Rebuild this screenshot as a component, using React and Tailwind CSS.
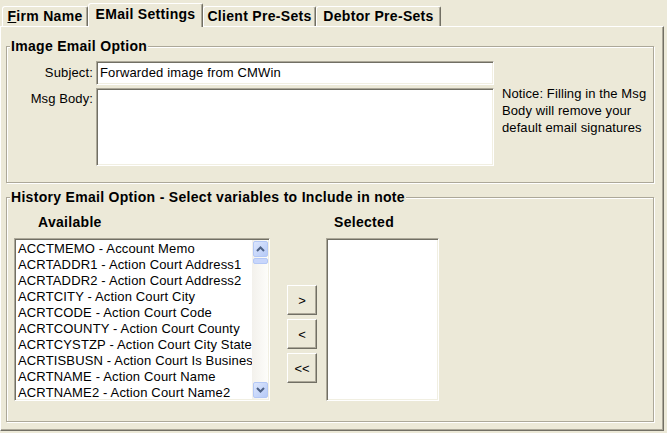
import React from "react";

const sunken =
  "border border-t-[#ACA899] border-l-[#ACA899] border-r-white border-b-white shadow-[inset_1px_1px_0_#716F64,inset_-1px_-1px_0_#F1EFE2] bg-white";

function Tab({ children, w, selected }) {
  const base =
    "flex items-center justify-center border-l border-t border-white border-r border-r-[#716F64] shadow-[inset_-1px_0_0_#ACA899] rounded-tl-[3px] rounded-tr-[2px] text-[14px] font-bold tracking-[0.3px] whitespace-nowrap bg-[#ECE9D8]";
  return (
    <div
      className={
        base +
        (selected
          ? " relative z-10 h-[24px] -mb-px pb-[3px]"
          : " h-[20px]")
      }
      style={{ width: w }}
    >
      {children}
    </div>
  );
}

function Group({ title, className, children }) {
  return (
    <div
      className={
        "relative w-[648px] border border-[#ACA899] shadow-[1px_1px_0_#fff,inset_1px_1px_0_#fff] " +
        className
      }
    >
      <span className="absolute top-[-9px] left-[3px] px-px leading-[16px] text-[14px] font-bold tracking-[0.3px] bg-[#ECE9D8] whitespace-nowrap">
        {title}
      </span>
      {children}
    </div>
  );
}

function Arrow({ up }) {
  return (
    <svg width="9" height="6" viewBox="0 0 9 6">
      <path
        d={up ? "M1 5 L4.5 1.5 L8 5" : "M1 1 L4.5 4.5 L8 1"}
        fill="none"
        stroke="#4D6185"
        strokeWidth="2"
      />
    </svg>
  );
}

function ScrollBtn({ up }) {
  return (
    <div className="h-[16px] w-[15px] mx-auto flex items-center justify-center rounded-[2px] border border-[#B4C8F6] bg-gradient-to-br from-[#DCE6FD] to-[#B6CAF7]">
      <Arrow up={up} />
    </div>
  );
}

const items = [
  "ACCTMEMO - Account Memo",
  "ACRTADDR1 - Action Court Address1",
  "ACRTADDR2 - Action Court Address2",
  "ACRTCITY - Action Court City",
  "ACRTCODE - Action Court Code",
  "ACRTCOUNTY - Action Court County",
  "ACRTCYSTZP - Action Court City State",
  "ACRTISBUSN - Action Court Is Business",
  "ACRTNAME - Action Court Name",
  "ACRTNAME2 - Action Court Name2",
];

function Btn({ children }) {
  return (
    <div className="h-[30px] w-[30px] flex items-center justify-center border border-t-white border-l-white border-r-[#716F64] border-b-[#716F64] shadow-[inset_-1px_-1px_0_#ACA899] text-[13px] leading-none">
      {children}
    </div>
  );
}

export default function App() {
  return (
    <div className="w-[667px] h-[433px] bg-[#ECE9D8] overflow-hidden text-black font-['Liberation_Sans',Arial,sans-serif]">
      <div className="flex items-end h-[26px] pl-[2px]">
        <Tab w={86}>
          <span>
            <span className="underline">F</span>irm Name
          </span>
        </Tab>
        <Tab w={115} selected>
          EMail Settings
        </Tab>
        <Tab w={113}>Client Pre-Sets</Tab>
        <Tab w={125}>Debtor Pre-Sets</Tab>
      </div>

      <div className="w-[664px] h-[405px] border-t border-l border-white border-r border-b border-r-[#716F64] border-b-[#716F64] shadow-[inset_-1px_-1px_0_#ACA899] pl-[5px] pt-[19px]">
        <Group title="Image Email Option" className="h-[137px] pt-[14px]">
          <div className="flex items-center text-[13px] tracking-[0.15px]">
            <div className="w-[86px] text-right">Subject:</div>
            <div className={"ml-[3px] w-[398px] h-[24px] flex items-center px-[3px] whitespace-nowrap " + sunken}>
              Forwarded image from CMWin
            </div>
          </div>
          <div className="flex items-start mt-[3px] text-[13px] tracking-[0.1px]">
            <div className="w-[86px] text-right pt-[3px] leading-[16px]">Msg Body:</div>
            <div className={"ml-[3px] w-[398px] h-[78px] " + sunken}></div>
            <div className="ml-[8px] mt-[-3px] leading-[17px] whitespace-nowrap">
              Notice: Filling in the Msg
              <br />
              Body will remove your
              <br />
              default email signatures
            </div>
          </div>
        </Group>

        <Group
          title="History Email Option - Select variables to Include in note"
          className="mt-[14px] h-[225px] pt-[16px] pl-[7px] flex items-start"
        >
          <div className="flex flex-col">
            <div className="h-[16px] leading-[16px] pl-[24px] text-[14px] font-bold tracking-[0.3px]">
              Available
            </div>
            <div className={"mt-[8px] w-[256px] h-[163px] p-px flex " + sunken}>
              <div className="w-[236px] overflow-hidden pt-px">
                {items.map((t) => (
                  <div
                    key={t}
                    className="h-[16px] leading-[16px] pl-[2px] text-[13px] tracking-[0.15px] whitespace-nowrap"
                  >
                    {t}
                  </div>
                ))}
              </div>
              <div className="w-[16px] flex flex-col justify-between bg-gradient-to-r from-[#F3F1EC] to-[#FDFDFA] pt-px pb-px">
                <div>
                  <ScrollBtn up />
                  <div className="mt-px mx-auto w-[15px] h-[6px] rounded-[2px] border border-[#B4C8F6] bg-[#C8D6FB]"></div>
                </div>
                <ScrollBtn />
              </div>
            </div>
          </div>

          <div className="flex flex-col gap-[4px] ml-[17px] mt-[71px]">
            <Btn>&gt;</Btn>
            <Btn>&lt;</Btn>
            <Btn>&lt;&lt;</Btn>
          </div>

          <div className="flex flex-col ml-[9px]">
            <div className="h-[16px] leading-[16px] pl-[8px] text-[14px] font-bold tracking-[0.3px]">
              Selected
            </div>
            <div className={"mt-[8px] w-[113px] h-[163px] " + sunken}></div>
          </div>
        </Group>
      </div>
    </div>
  );
}
